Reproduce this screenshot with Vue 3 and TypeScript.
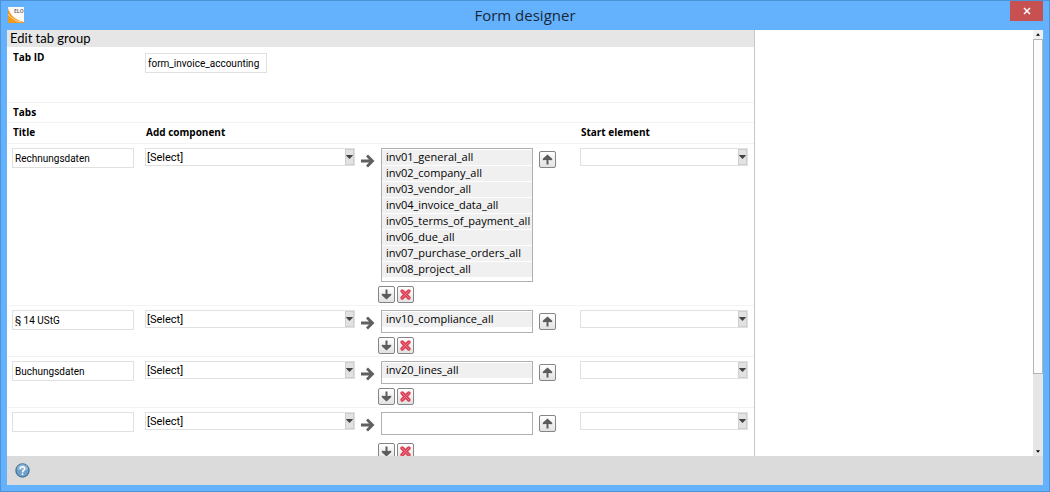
<script setup lang="ts">
import { reactive, ref } from 'vue'

interface TabRow {
  title: string
  component: string
  items: string[]
  selected: number
  start: string
}

const makeRow = (title: string, items: string[]): TabRow => ({
  title,
  component: '',
  items,
  selected: -1,
  start: '',
})

const tabId = ref('form_invoice_accounting')

const rows = reactive<TabRow[]>([
  makeRow('Rechnungsdaten', [
    'inv01_general_all',
    'inv02_company_all',
    'inv03_vendor_all',
    'inv04_invoice_data_all',
    'inv05_terms_of_payment_all',
    'inv06_due_all',
    'inv07_purchase_orders_all',
    'inv08_project_all',
  ]),
  makeRow('§ 14 UStG', ['inv10_compliance_all']),
  makeRow('Buchungsdaten', ['inv20_lines_all']),
  makeRow('', []),
])

function move(row: TabRow, step: number) {
  const from = row.selected
  const to = from + step
  if (from < 0 || to < 0 || to >= row.items.length) return
  const [item] = row.items.splice(from, 1)
  row.items.splice(to, 0, item)
  row.selected = to
}

function removeItem(row: TabRow) {
  if (row.selected < 0) return
  row.items.splice(row.selected, 1)
  row.selected = -1
}
</script>

<template>
  <div class="window">
    <header class="titlebar">
      <svg class="logo" viewBox="0 0 16 16" aria-hidden="true">
        <rect width="16" height="16" fill="#fdfaf7" />
        <path d="M0 1C2 8 7 13 16 15V16H0Z" fill="#f39a1d" />
        <path d="M0 7C3 11 7 14 13 15" fill="none" stroke="#fbd9a6" stroke-width="1" />
        <text x="6" y="6" class="logo-text">ELO</text>
      </svg>
      <h1>Form designer</h1>
      <button class="close" type="button" aria-label="Close">
        <svg viewBox="0 0 8 8"><path d="M1 1L7 7M7 1L1 7" stroke="#fff" stroke-width="1.5" /></svg>
      </button>
    </header>

    <div class="body">
      <main class="panel">
        <h2>Edit tab group</h2>
        <div class="tab-id">
          <label for="tab-id">Tab ID</label>
          <div class="tab-id-field"><input id="tab-id" v-model="tabId" class="text" type="text" /></div>
        </div>
        <h3>Tabs</h3>
        <table>
          <thead>
            <tr>
              <th class="c-title" scope="col">Title</th>
              <th class="c-comp" scope="col">Add component</th>
              <th class="c-start" scope="col">Start element</th>
            </tr>
          </thead>
          <tbody>
            <tr v-for="(row, r) in rows" :key="r">
              <td><input v-model="row.title" class="text" type="text" aria-label="Title" /></td>
              <td>
                <div class="component">
                  <div class="combo">
                    <select v-model="row.component" aria-label="Add component">
                      <option value="">[Select]</option>
                    </select>
                    <span class="drop"><svg viewBox="0 0 8 5"><path d="M0 0H8V1L4 5L0 1Z" /></svg></span>
                  </div>
                  <button class="add" type="button" aria-label="Add">
                    <svg viewBox="0 0 15 14">
                      <path d="M1 7H12M7 1.5L12.5 7L7 12.5" fill="none" stroke="#606060" stroke-width="2.8" />
                    </svg>
                  </button>
                  <div class="list-area">
                    <ul role="listbox" aria-label="Components">
                      <li
                        v-for="(item, i) in row.items"
                        :key="item"
                        role="option"
                        :aria-selected="row.selected === i"
                        @click="row.selected = i"
                      >{{ item }}</li>
                    </ul>
                    <div class="tools" :class="{ spaced: row.items.length === 0 }">
                      <button class="tool" type="button" aria-label="Move down" @click="move(row, 1)">
                        <svg viewBox="0 0 15 15"><path d="M6.5 2.5H8.5V7L12.2 6.8V8.2L7.5 12.5L2.8 8.2V6.8L6.5 7Z" fill="#5c5c5c" /></svg>
                      </button>
                      <button class="tool" type="button" aria-label="Remove" @click="removeItem(row)">
                        <svg viewBox="0 0 15 15">
                          <path d="M4.2 4.2L10.8 10.8M10.8 4.2L4.2 10.8" stroke="#dc4358" stroke-width="3.8" stroke-linecap="round" />
                          <path d="M4.2 4.2L10.8 10.8M10.8 4.2L4.2 10.8" stroke="#ea7383" stroke-width="1" stroke-linecap="round" />
                        </svg>
                      </button>
                    </div>
                  </div>
                  <button class="tool up" type="button" aria-label="Move up" @click="move(row, -1)">
                    <svg viewBox="0 0 15 15"><path d="M6.5 12.5H8.5V8L12.2 8.2V6.8L7.5 2.5L2.8 6.8V8.2L6.5 8Z" fill="#5c5c5c" /></svg>
                  </button>
                </div>
              </td>
              <td>
                <div class="combo">
                  <select v-model="row.start" aria-label="Start element">
                    <option value=""></option>
                  </select>
                  <span class="drop"><svg viewBox="0 0 8 5"><path d="M0 0H8V1L4 5L0 1Z" /></svg></span>
                </div>
              </td>
            </tr>
          </tbody>
        </table>
      </main>
      <div class="blank"></div>
      <div class="scrollbar" aria-hidden="true">
        <span class="arrow"><svg viewBox="0 0 6 4"><path d="M3 0L6 4H0Z" /></svg></span>
        <span class="thumb"></span>
        <span class="track"></span>
        <span class="arrow end"><svg viewBox="0 0 6 4"><path d="M3 4L6 0H0Z" /></svg></span>
      </div>
    </div>

    <footer>
      <button class="help" type="button" aria-label="Help">
        <svg viewBox="0 0 16 16">
          <circle cx="8" cy="8" r="7" fill="#6fa0cb" stroke="#41749c" stroke-width="1.4" />
          <path d="M2 7A6 6 0 0 1 14 7Q8 9 2 7Z" fill="#a4c4e0" opacity=".6" />
          <path d="M5.6 6.4C5.6 3.3 10.6 3.3 10.4 6.2C10.3 7.9 8 7.8 8 10" fill="none" stroke="#fff" stroke-width="1.7" />
          <circle cx="8" cy="12" r="1" fill="#fff" />
        </svg>
      </button>
    </footer>
  </div>
</template>

<style>
body {
  margin: 0;
}
</style>

<style scoped>
* {
  box-sizing: border-box;
}

.window {
  display: flex;
  flex-direction: column;
  height: 100vh;
  padding: 0 6px 6px;
  background: #64b2fd;
  border: 1px solid #4c93d8;
  color: #000;
  font-family: "Open Sans", "Noto Sans", sans-serif;
  font-size: 11px;
  line-height: 16px;
}

h1, h2, h3, ul {
  margin: 0;
  padding: 0;
}

button {
  padding: 0;
  border: 0;
  background: none;
  font: inherit;
}

svg {
  display: block;
}

.titlebar {
  display: grid;
  grid-template-columns: 1fr auto 1fr;
  flex: none;
  height: 29px;
}

.logo {
  width: 16px;
  height: 16px;
  margin: 6px 0 0 1px;
}

.logo-text {
  fill: #777;
  font-size: 5px;
  font-weight: 700;
}

h1 {
  color: #182838;
  font-size: 15px;
  font-weight: 400;
  line-height: 29px;
}

.close {
  display: grid;
  place-items: center;
  justify-self: end;
  width: 33px;
  height: 20px;
  background: #c75050;
}

.close svg {
  width: 8px;
  height: 8px;
}

.body {
  display: flex;
  flex: 1;
  min-height: 0;
  background: #fff;
}

.panel {
  flex: 748 1 0;
  overflow: hidden;
  border-right: 1px solid #c6c6c6;
}

.blank {
  flex: 278 1 0;
}

h2 {
  height: 17px;
  padding-left: 3px;
  background: #e6e6e6;
  font-family: Lato, "Open Sans", sans-serif;
  font-size: 13px;
  font-weight: 400;
  line-height: 16px;
}

.tab-id {
  display: flex;
  height: 56px;
  border-bottom: 1px solid #f3f3f3;
}

.tab-id label,
h3,
th {
  font-size: 10px;
  font-weight: 700;
}

.tab-id label {
  flex: none;
  width: 133px;
  padding: 2px 0 0 6px;
}

.tab-id-field {
  flex: none;
  width: 127px;
  padding: 6px 0 0 5px;
}

h3 {
  height: 20px;
  padding-left: 6px;
  border-bottom: 1px solid #f3f3f3;
  line-height: 18px;
}

table {
  width: 100%;
  border-collapse: separate;
  border-spacing: 0;
  table-layout: fixed;
}

th {
  height: 21px;
  padding: 0 0 0 6px;
  border-bottom: 1px solid #f3f3f3;
  line-height: 18px;
  text-align: left;
  vertical-align: top;
}

.c-title {
  width: 133px;
}

.c-start {
  width: 24%;
}

td {
  padding: 4px 6px 2px 5px;
  border-bottom: 1px solid #f3f3f3;
  vertical-align: top;
}

.text {
  display: block;
  width: 100%;
  height: 20px;
  padding: 1px 2px 0;
  border: 1px solid #e0e0e0;
  background: #fff;
  color: inherit;
  font-family: Roboto, "Open Sans", sans-serif;
  font-size: 10px;
}

.combo {
  display: grid;
  flex: 1;
  min-width: 0;
  height: 18px;
  border: 1px solid #e0e0e0;
}

.combo select,
.drop {
  grid-area: 1 / 1;
}

.combo select {
  width: 100%;
  height: 16px;
  padding: 0 1px;
  appearance: none;
  border: 0;
  background: #fff;
  color: inherit;
  font-family: Roboto, "Open Sans", sans-serif;
  font-size: 11px;
}

.drop {
  display: grid;
  place-items: center;
  justify-self: end;
  width: 9px;
  height: 16px;
  border: 1px solid #cfcfcf;
  background: #e2e2e2;
  pointer-events: none;
}

.drop svg {
  width: 7px;
  height: 4px;
  fill: #444;
}

.component {
  display: flex;
  align-items: flex-start;
  padding-right: 13px;
}

.add {
  margin: 6px 3px 0 5px;
}

.add svg {
  width: 15px;
  height: 14px;
}

.list-area {
  width: 155px;
}

ul {
  min-height: 23px;
  margin-left: 3px;
  padding: 1px 0 3px;
  border: 1px solid #b0b0b0;
  list-style: none;
}

li {
  height: 16px;
  padding-left: 4px;
  border-bottom: 1px solid #fff;
  background: #f0f0f0;
  line-height: 14px;
  white-space: nowrap;
}

li[aria-selected="true"] {
  background: #cfe4fa;
}

.tools {
  display: flex;
  gap: 2px;
  margin-top: 4px;
}

.tools.spaced {
  margin-top: 8px;
}

.tool {
  width: 17px;
  height: 17px;
  border: 1px solid #858585;
  border-radius: 2px;
  background: linear-gradient(#fff, #e2e2e2);
}

.tool svg {
  width: 15px;
  height: 15px;
}

.up {
  margin: 3px 0 0 6px;
}

.scrollbar {
  display: flex;
  flex: none;
  flex-direction: column;
  width: 10px;
  background: #e6e6e6;
}

.arrow {
  display: grid;
  place-items: center;
  height: 9px;
  background: #f0f0f0;
}

.arrow.end {
  background: #e6e6e6;
}

.arrow svg {
  width: 4px;
  height: 3px;
}

.thumb {
  flex: 335;
  border: 1px solid #b5b5b5;
  background: #fcfcfc;
}

.track {
  flex: 73;
}

footer {
  display: flex;
  flex: none;
  align-items: center;
  height: 29px;
  padding-left: 8px;
  background: #dbdbdb;
}

.help svg {
  width: 15px;
  height: 15px;
}
</style>
